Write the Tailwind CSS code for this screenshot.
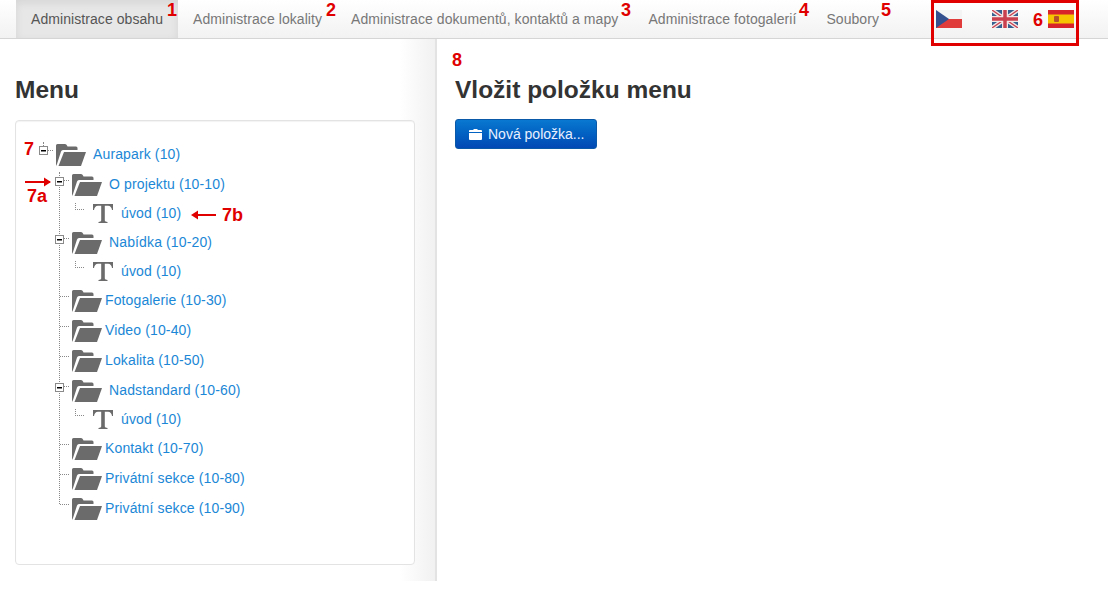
<!DOCTYPE html>
<html lang="cs">
<head>
<meta charset="UTF-8">
<title>Administrace obsahu</title>
<script src="https://cdn.jsdelivr.net/npm/@tailwindcss/browser@4"></script>
</head>
<body class="bg-white font-['Liberation_Sans',Arial,sans-serif] text-[14px] tracking-[0.13px] text-[#333]">
<svg class="hidden">
  <symbol id="folder" viewBox="0 0 30 23">
    <path fill="#6b6b6b" d="M0 23V2.500Q0 1 1.500 1H9q1.500 0 2 1.500l.5 1H20q1.500 0 1.500 1.500v2H7q-1.500 0-2 1.500L1 21z"/>
    <path fill="#6b6b6b" d="M8 9H30L25 23H2.500z"/>
  </symbol>
  <symbol id="texticon" viewBox="0 0 20 19">
    <path fill="#6b6b6b" d="M0 0H20V6H19Q18.500 2 15 1.800H11.800V16.500Q11.800 17.800 14.500 18V19H5.500V18Q8.200 17.800 8.200 16.500V1.800H5Q1.500 2 1 6H0z"/>
  </symbol>
  <symbol id="toggle" viewBox="0 0 9 9">
    <rect x=".5" y=".5" width="8" height="8" fill="#fff" stroke="#8a8a8a"/>
    <rect x="2" y="4" width="5" height="1.500" fill="#000"/>
  </symbol>
</svg>

<div class="w-[1108px] relative">
  <header class="h-[39px] flex pl-[16px] border-b border-[#d5d5d5] bg-gradient-to-b from-white to-[#f2f2f2] text-[#777] tracking-[0.07px]">
    <a class="w-[162px] h-[38px] flex items-center pl-[15px] bg-[#e7e7e7] text-[#555] shadow-[inset_0_3px_8px_rgba(0,0,0,0.08)]">Administrace obsahu</a>
    <a class="h-[38px] flex items-center ml-[15px]">Administrace lokality</a>
    <a class="h-[38px] flex items-center ml-[29px]">Administrace dokumentů, kontaktů a mapy</a>
    <a class="h-[38px] flex items-center ml-[30px]">Administrace fotogalerií</a>
    <a class="h-[38px] flex items-center ml-[30px]">Soubory</a>
    <div class="flex ml-[57px] mt-[10px] h-[18px] items-start">
      <svg width="26" height="18" viewBox="0 0 26 18">
        <rect width="26" height="9" fill="#f4f4f4"/>
        <rect y="9" width="26" height="9" fill="#e03c3c"/>
        <path d="M0 0L13 9L0 18z" fill="#34508f"/>
      </svg>
      <svg class="ml-[30px]" width="26" height="18" viewBox="0 0 26 18">
        <rect width="26" height="18" fill="#35608f"/>
        <path d="M0 0L26 18M26 0L0 18" stroke="#f2e8e8" stroke-width="4"/>
        <path d="M0 0L26 18M26 0L0 18" stroke="#c9404f" stroke-width="1.300"/>
        <path d="M13 0V18M0 9H26" stroke="#f2e8e8" stroke-width="6"/>
        <path d="M13 0V18M0 9H26" stroke="#c9404f" stroke-width="3.500"/>
      </svg>
      <svg class="ml-[30px]" width="26" height="18" viewBox="0 0 26 18">
        <rect width="26" height="18" fill="#d8232a"/>
        <rect y="4.500" width="26" height="9" fill="#f6c400"/>
        <rect x="6" y="6" width="5" height="6" rx="1" fill="#b5502a"/>
      </svg>
    </div>
  </header>

  <div class="flex h-[542px]">
    <aside class="w-[437px] border-r-2 border-[#e3e3e3] pl-[15px] bg-gradient-to-r from-white from-[92%] to-[#f1f1f1]">
      <h2 class="text-[24.5px] tracking-normal leading-[26px] font-bold mt-[38px]">Menu</h2>
      <div class="w-[400px] h-[445px] mt-[17px] bg-white border border-[#e3e3e3] rounded-[4px] shadow-[inset_0_1px_1px_rgba(0,0,0,0.05)] pt-[16px] text-[#1b87d6]">
        <div class="relative h-[30px] flex items-start pl-[40px]">
          <svg class="absolute left-[23px] top-[9px]" width="9" height="9"><use href="#toggle"/></svg>
          <span class="absolute left-[27px] top-[5px] h-[4px] border-l border-dotted border-[#888]"></span>
          <span class="absolute left-[32px] top-[13px] w-[5px] border-t border-dotted border-[#888]"></span>
          <svg width="30" height="23" class="mt-[6px]"><use href="#folder"/></svg>
          <span class="ml-[7px] mt-[7px]">Aurapark (10)</span>
        </div>

        <div class="relative pl-[39px]">
          <span class="absolute left-[43px] top-[5px] bottom-[17px] border-l border-dotted border-[#888]"></span>

          <div class="relative h-[29px] flex items-start pl-[17px]">
            <svg class="absolute left-0 top-[10px]" width="9" height="9"><use href="#toggle"/></svg>
            <span class="absolute left-[9px] top-[13px] w-[5px] border-t border-dotted border-[#888]"></span>
            <svg width="30" height="23" class="mt-[6px]"><use href="#folder"/></svg>
            <span class="ml-[7px] mt-[7px]">O projektu (10-10)</span>
          </div>
          <div class="relative h-[29px] flex items-start pl-[38px]">
            <span class="absolute left-[20px] top-[7px] w-[9px] h-[7px] border-l border-b border-dotted border-[#888]"></span>
            <svg width="20" height="19" class="mt-[8px]"><use href="#texticon"/></svg>
            <span class="ml-[8px] mt-[7px]">úvod (10)</span>
          </div>
          <div class="relative h-[29px] flex items-start pl-[17px]">
            <svg class="absolute left-0 top-[10px]" width="9" height="9"><use href="#toggle"/></svg>
            <span class="absolute left-[9px] top-[13px] w-[5px] border-t border-dotted border-[#888]"></span>
            <svg width="30" height="23" class="mt-[6px]"><use href="#folder"/></svg>
            <span class="ml-[7px] mt-[7px]">Nabídka (10-20)</span>
          </div>
          <div class="relative h-[29px] flex items-start pl-[38px]">
            <span class="absolute left-[20px] top-[7px] w-[9px] h-[7px] border-l border-b border-dotted border-[#888]"></span>
            <svg width="20" height="19" class="mt-[8px]"><use href="#texticon"/></svg>
            <span class="ml-[8px] mt-[7px]">úvod (10)</span>
          </div>
          <div class="relative h-[30px] flex items-start pl-[17px]">
            <span class="absolute left-[5px] top-[13px] w-[9px] border-t border-dotted border-[#888]"></span>
            <svg width="30" height="23" class="mt-[6px]"><use href="#folder"/></svg>
            <span class="ml-[3px] mt-[7px]">Fotogalerie (10-30)</span>
          </div>
          <div class="relative h-[30px] flex items-start pl-[17px]">
            <span class="absolute left-[5px] top-[13px] w-[9px] border-t border-dotted border-[#888]"></span>
            <svg width="30" height="23" class="mt-[6px]"><use href="#folder"/></svg>
            <span class="ml-[3px] mt-[7px]">Video (10-40)</span>
          </div>
          <div class="relative h-[30px] flex items-start pl-[17px]">
            <span class="absolute left-[5px] top-[13px] w-[9px] border-t border-dotted border-[#888]"></span>
            <svg width="30" height="23" class="mt-[6px]"><use href="#folder"/></svg>
            <span class="ml-[3px] mt-[7px]">Lokalita (10-50)</span>
          </div>
          <div class="relative h-[29px] flex items-start pl-[17px]">
            <svg class="absolute left-0 top-[10px]" width="9" height="9"><use href="#toggle"/></svg>
            <span class="absolute left-[9px] top-[13px] w-[5px] border-t border-dotted border-[#888]"></span>
            <svg width="30" height="23" class="mt-[6px]"><use href="#folder"/></svg>
            <span class="ml-[7px] mt-[7px]">Nadstandard (10-60)</span>
          </div>
          <div class="relative h-[29px] flex items-start pl-[38px]">
            <span class="absolute left-[20px] top-[7px] w-[9px] h-[7px] border-l border-b border-dotted border-[#888]"></span>
            <svg width="20" height="19" class="mt-[8px]"><use href="#texticon"/></svg>
            <span class="ml-[8px] mt-[7px]">úvod (10)</span>
          </div>
          <div class="relative h-[30px] flex items-start pl-[17px]">
            <span class="absolute left-[5px] top-[13px] w-[9px] border-t border-dotted border-[#888]"></span>
            <svg width="30" height="23" class="mt-[6px]"><use href="#folder"/></svg>
            <span class="ml-[3px] mt-[7px]">Kontakt (10-70)</span>
          </div>
          <div class="relative h-[30px] flex items-start pl-[17px]">
            <span class="absolute left-[5px] top-[13px] w-[9px] border-t border-dotted border-[#888]"></span>
            <svg width="30" height="23" class="mt-[6px]"><use href="#folder"/></svg>
            <span class="ml-[3px] mt-[7px]">Privátní sekce (10-80)</span>
          </div>
          <div class="relative h-[30px] flex items-start pl-[17px]">
            <span class="absolute left-[5px] top-[13px] w-[9px] border-t border-dotted border-[#888]"></span>
            <svg width="30" height="23" class="mt-[6px]"><use href="#folder"/></svg>
            <span class="ml-[3px] mt-[7px]">Privátní sekce (10-90)</span>
          </div>
        </div>
      </div>
    </aside>

    <main class="pl-[18px]">
      <h1 class="text-[24.5px] tracking-normal leading-[26px] font-bold mt-[38px]">Vložit položku menu</h1>
      <button class="mt-[16px] w-[142px] h-[30px] flex items-center pl-[13px] rounded-[3px] border border-[#0a58a8] bg-gradient-to-b from-[#0a78d0] to-[#0348b4] text-[#e8f0ff] tracking-normal">
        <svg width="13" height="11" viewBox="0 0 13 11"><path fill="#fff" d="M0 2Q0 1 1 1H4L5 0H8L9 1H12Q13 1 13 2V3H0zM0 4H13V10Q13 11 12 11H1Q0 11 0 10z"/></svg>
        <span class="ml-[6px]">Nová položka...</span>
      </button>
    </main>
  </div>

  <!-- cervene popisky pres obrazovku -->
  <div class="text-[#e00000] font-bold text-[18px] leading-[18px] tracking-normal">
    <span class="absolute left-[167px] top-[1px]">1</span>
    <span class="absolute left-[326px] top-[1px]">2</span>
    <span class="absolute left-[621px] top-[1px]">3</span>
    <span class="absolute left-[799px] top-[1px]">4</span>
    <span class="absolute left-[881px] top-[1px]">5</span>
    <span class="absolute left-[1033px] top-[11px]">6</span>
    <span class="absolute left-[24px] top-[140px]">7</span>
    <span class="absolute left-[27px] top-[187px]">7a</span>
    <span class="absolute left-[222px] top-[206px]">7b</span>
    <span class="absolute left-[452px] top-[51px]">8</span>
  </div>
  <div class="absolute left-[931px] top-0 w-[148px] h-[46px] border-[3px] border-[#e00000]"></div>
  <svg class="absolute left-[25px] top-[176px]" width="28" height="12" viewBox="0 0 28 12"><path d="M0 6H25" stroke="#e00000" stroke-width="2"/><path d="M26 6L19 1.500V10.500z" fill="#e00000"/></svg>
  <svg class="absolute left-[190px] top-[209px]" width="28" height="12" viewBox="0 0 28 12"><path d="M4 6H26" stroke="#e00000" stroke-width="2"/><path d="M1 6L8 1.500V10.500z" fill="#e00000"/></svg>
</div>
</body>
</html>
